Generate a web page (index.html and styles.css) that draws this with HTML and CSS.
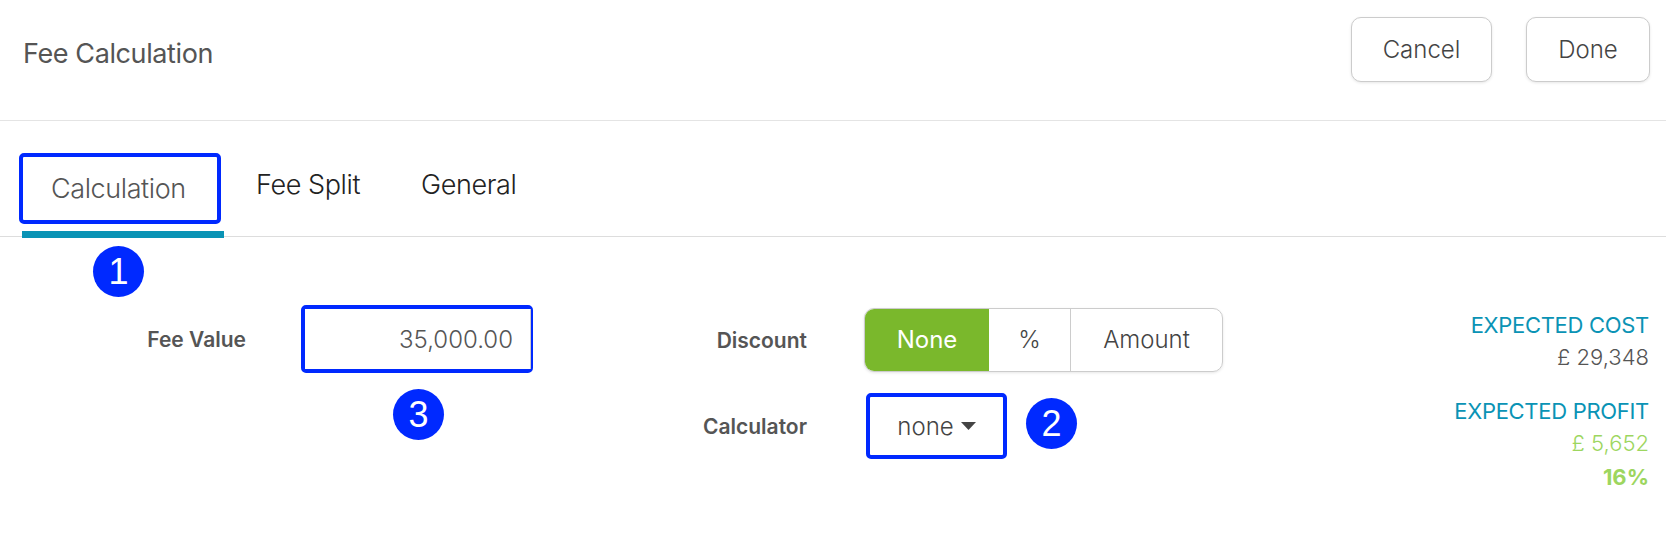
FILE: index.html
```html
<!DOCTYPE html>
<html lang="en">
<head>
  <meta charset="UTF-8">
  <title>Fee Calculation</title>
  <link rel="stylesheet" href="styles.css">
</head>
<body>
  <header class="top-bar">
    <h1>Fee Calculation</h1>
    <div class="top-actions">
      <button class="btn btn-cancel">Cancel</button>
      <button class="btn btn-done">Done</button>
    </div>
  </header>

  <nav class="tabs">
    <a class="tab active">Calculation<span class="badge badge-tab">1</span></a>
    <a class="tab tab-split">Fee Split</a>
    <a class="tab tab-general">General</a>
  </nav>

  <main class="form-row">
    <div class="fee-col">
      <label class="field-label fee-label">Fee Value</label>
      <div class="fee-input">
        <input type="text" value="35,000.00">
        <span class="badge badge-fee">3</span>
      </div>
    </div>

    <div class="discount-col">
      <label class="field-label">Discount</label>
      <div class="segments">
        <span class="segment on">None</span>
        <span class="segment pct">%</span>
        <span class="segment amount">Amount</span>
      </div>
      <label class="field-label calc-label">Calculator</label>
      <div class="calc-select">
        none<svg class="caret" width="15" height="8" viewBox="0 0 15 8"><path d="M0 0h15L7.5 8z" fill="#444"/></svg>
        <span class="badge badge-calc">2</span>
      </div>
    </div>

    <aside class="summary">
      <div class="sum-title">EXPECTED COST</div>
      <div class="sum-value">£ 29,348</div>
      <div class="sum-title profit-title">EXPECTED PROFIT</div>
      <div class="sum-value green">£ 5,652</div>
      <div class="sum-pct green">16%</div>
    </aside>
  </main>
</body>
</html>
```

FILE: styles.css
```css
body {
  font-family: Inter, "Noto Sans", sans-serif;
  font-weight: 300;
  background-color: #fff;
  color: #444;
  margin: 0;
  padding: 0;
}

.top-bar {
  display: flex;
  justify-content: space-between;
  height: 121px;
  border-bottom: 1px solid #e4e4e4;
  padding: 17px 16px 0 23px;
  box-sizing: border-box;
}

h1 {
  margin: 17px 0 0;
  font-size: 27px;
  line-height: 40px;
  font-weight: 400;
  color: #555;
  letter-spacing: -0.4px;
}

.top-actions {
  display: flex;
  gap: 34px;
}

.btn {
  height: 65px;
  font-family: inherit;
  font-size: 24px;
  font-weight: 300;
  color: #444;
  background-color: #fff;
  border: 1px solid #ccc;
  border-radius: 10px;
  box-shadow: 0 1px 3px rgba(0, 0, 0, 0.1);
  padding: 0;
}

.btn-cancel {
  width: 141px;
}

.btn-done {
  width: 124px;
}

.tabs {
  display: flex;
  height: 116px;
  box-sizing: border-box;
  margin-top: 0;
  padding: 32px 0 0 19px;
  border-bottom: 1px solid #ddd;
  font-size: 27px;
  color: #222;
}

.tab {
  height: 71px;
  line-height: 64px;
  letter-spacing: -0.4px;
}

.tab.active {
  position: relative;
  box-sizing: border-box;
  width: 202px;
  padding-left: 28px;
  color: #555;
  border: 4px solid #0029ff;
  border-radius: 5px;
}

/* teal underline sits just below the annotation box */
.tab.active::after {
  content: "";
  position: absolute;
  left: -1px;
  top: 74px;
  width: 202px;
  height: 7px;
  background-color: #0a93b5;
}

.tab-split {
  margin-left: 35px;
}

.tab-general {
  margin-left: 61px;
}

.badge {
  position: absolute;
  width: 51px;
  height: 51px;
  border-radius: 50%;
  background-color: #0029ff;
  color: #fff;
  font-family: "Liberation Sans", Arial, sans-serif;
  font-size: 36px;
  font-weight: 400;
  line-height: 51px;
  text-align: center;
  letter-spacing: 0;
}

.badge-tab {
  left: 70px;
  top: 89px;
}

.badge-fee {
  left: 88px;
  top: 80px;
}

.badge-calc {
  left: 156px;
  top: 1px;
}

.form-row {
  display: flex;
  align-items: flex-start;
  padding: 0 17px 0 0;
}

.fee-col {
  display: flex;
  align-items: center;
  width: 533px;
  margin-top: 68px;
  flex: none;
}

.field-label {
  font-size: 21px;
  font-weight: 600;
  color: #555;
  text-align: right;
}

.fee-label {
  width: 246px;
  margin-right: 55px;
}

.fee-input {
  position: relative;
  box-sizing: border-box;
  width: 232px;
  height: 68px;
  border: 4px solid #0029ff;
  border-radius: 5px;
}

.fee-input input {
  box-sizing: border-box;
  width: 226px;
  height: 60px;
  padding: 0 17px 0 0;
  border: none;
  border-right: 1px solid #ccc;
  outline: none;
  text-align: right;
  font-family: inherit;
  font-size: 24px;
  font-weight: 300;
  color: #555;
}

.discount-col {
  display: grid;
  grid-template-columns: 274px auto;
  column-gap: 57px;
  row-gap: 21px;
  align-items: center;
  margin-top: 71px;
}

.segments {
  display: flex;
  width: 359px;
  height: 64px;
  box-sizing: border-box;
  border: 1px solid #ccc;
  border-radius: 10px;
  box-shadow: 0 1px 3px rgba(0, 0, 0, 0.1);
  overflow: hidden;
  font-size: 24px;
  line-height: 62px;
  text-align: center;
}

.segment.on {
  width: 124px;
  background-color: #7ab82c;
  color: #fff;
  font-weight: 400;
}

.segment.pct {
  width: 81px;
  border-right: 1px solid #ccc;
}

.segment.amount {
  flex: 1;
}

.calc-select {
  position: relative;
  display: flex;
  align-items: center;
  justify-content: center;
  gap: 7px;
  box-sizing: border-box;
  width: 141px;
  height: 66px;
  margin-left: 2px;
  border: 4px solid #0029ff;
  border-radius: 5px;
  font-size: 24px;
}

.summary {
  margin-left: auto;
  margin-top: 72px;
  text-align: right;
  font-size: 22px;
  line-height: 32px;
}

.sum-title {
  color: #0a93b5;
  font-weight: 400;
  letter-spacing: -0.3px;
}

.profit-title {
  margin-top: 22px;
}

.sum-value {
  color: #555;
}

.green {
  color: #9dd65f;
}

.sum-pct {
  font-weight: 700;
  margin-top: 2px;
}
```
